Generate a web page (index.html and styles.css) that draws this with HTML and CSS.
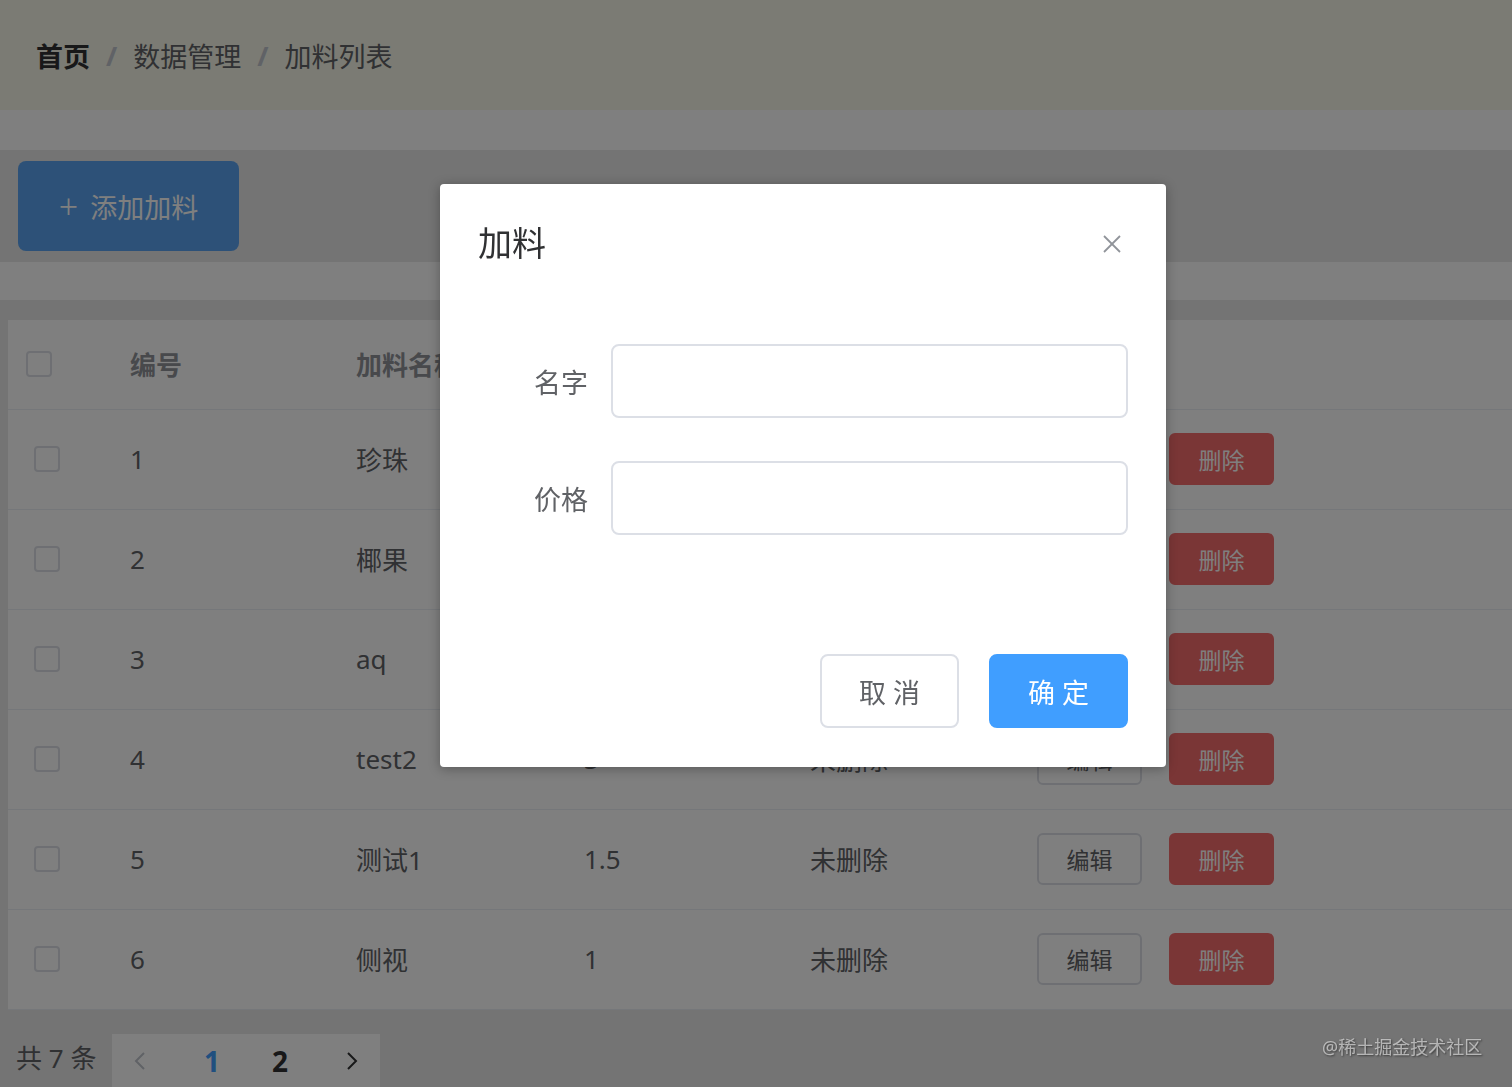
FILE: index.html
```html
<!DOCTYPE html>
<html lang="zh-CN">
<head>
    <meta charset="UTF-8">
    <meta name="viewport" content="width=device-width, initial-scale=1.0">
    <title>加料列表</title>
    <link rel="stylesheet" href="styles.css">
</head>
<body>
    <div class="breadcrumb">
        <span class="crumb crumb-home">首页</span>
        <span class="crumb-sep">/</span>
        <span class="crumb">数据管理</span>
        <span class="crumb-sep">/</span>
        <span class="crumb">加料列表</span>
    </div>

    <div class="gap-band"></div>

    <div class="toolbar">
        <button class="add-btn"><span class="add-plus">+</span>添加加料</button>
    </div>

    <div class="gap-band gap-small"></div>

    <div class="content">
        <table class="data-table">
            <colgroup>
                <col style="width: 99px">
                <col style="width: 226px">
                <col style="width: 228px">
                <col style="width: 226px">
                <col style="width: 227px">
                <col>
            </colgroup>
            <thead>
                <tr>
                    <th class="check-head"><span class="checkbox"></span></th>
                    <th>编号</th>
                    <th>加料名称</th>
                    <th>价格</th>
                    <th>状态</th>
                    <th>操作</th>
                </tr>
            </thead>
            <tbody>
                <tr>
                    <td class="check-cell"><span class="checkbox"></span></td>
                    <td>1</td><td>珍珠</td><td>2</td><td>未删除</td>
                    <td><button class="row-btn">编辑</button><button class="row-btn danger">删除</button></td>
                </tr>
                <tr>
                    <td class="check-cell"><span class="checkbox"></span></td>
                    <td>2</td><td>椰果</td><td>2</td><td>未删除</td>
                    <td><button class="row-btn">编辑</button><button class="row-btn danger">删除</button></td>
                </tr>
                <tr>
                    <td class="check-cell"><span class="checkbox"></span></td>
                    <td>3</td><td>aq</td><td>1</td><td>未删除</td>
                    <td><button class="row-btn">编辑</button><button class="row-btn danger">删除</button></td>
                </tr>
                <tr>
                    <td class="check-cell"><span class="checkbox"></span></td>
                    <td>4</td><td>test2</td><td>3</td><td>未删除</td>
                    <td><button class="row-btn">编辑</button><button class="row-btn danger">删除</button></td>
                </tr>
                <tr>
                    <td class="check-cell"><span class="checkbox"></span></td>
                    <td>5</td><td>测试1</td><td>1.5</td><td>未删除</td>
                    <td><button class="row-btn">编辑</button><button class="row-btn danger">删除</button></td>
                </tr>
                <tr>
                    <td class="check-cell"><span class="checkbox"></span></td>
                    <td>6</td><td>侧视</td><td>1</td><td>未删除</td>
                    <td><button class="row-btn">编辑</button><button class="row-btn danger">删除</button></td>
                </tr>
            </tbody>
        </table>

        <div class="pagination">
            <span class="total">共 7 条</span>
            <div class="pager">
                <span class="pager-arrow disabled">
                    <svg width="14" height="22" viewBox="0 0 14 22"><polyline points="11,3 3,11 11,19" fill="none" stroke="currentColor" stroke-width="2"/></svg>
                </span>
                <span class="pager-num active">1</span>
                <span class="pager-num">2</span>
                <span class="pager-arrow">
                    <svg width="14" height="22" viewBox="0 0 14 22"><polyline points="3,3 11,11 3,19" fill="none" stroke="currentColor" stroke-width="2"/></svg>
                </span>
            </div>
        </div>
    </div>

    <!-- dialog -->
    <div class="modal-mask"></div>
    <div class="dialog">
        <div class="dialog-header">
            <span class="dialog-title">加料</span>
            <svg class="dialog-close" width="20" height="20" viewBox="0 0 20 20">
                <line x1="2" y1="2" x2="18" y2="18" stroke="#909399" stroke-width="1.8"/>
                <line x1="18" y1="2" x2="2" y2="18" stroke="#909399" stroke-width="1.8"/>
            </svg>
        </div>
        <div class="dialog-body">
            <div class="form-item">
                <label class="form-label">名字</label>
                <input class="form-input" type="text">
            </div>
            <div class="form-item">
                <label class="form-label">价格</label>
                <input class="form-input" type="text">
            </div>
        </div>
        <div class="dialog-footer">
            <button class="dlg-btn">取 消</button>
            <button class="dlg-btn primary">确 定</button>
        </div>
    </div>

    <div class="watermark">@稀土掘金技术社区</div>
</body>
</html>
```

FILE: styles.css
```css
* {
    box-sizing: border-box;
    margin: 0;
    padding: 0;
}

html, body {
    overflow: hidden;
}

body {
    width: 1512px;
    height: 1087px;
    background-color: #fff;
    font-family: "Noto Sans", "Noto Sans CJK SC", sans-serif;
    color: #606266;
}

button, input {
    font-family: inherit;
}

/* breadcrumb */
.breadcrumb {
    height: 110px;
    display: flex;
    align-items: center;
    padding-left: 36px;
    background-color: #f6f6e8;
    font-size: 27px;
}

.crumb {
    color: #606266;
}

.crumb-home {
    color: #303133;
    font-weight: bold;
}

.crumb-sep {
    color: #c0c4cc;
    margin: 0 16px;
    font-weight: bold;
}

.gap-band {
    height: 40px;
    background-color: #fff;
}

.gap-small {
    height: 38px;
}

/* toolbar */
.toolbar {
    height: 112px;
    background-color: #e8e8e8;
    padding: 11px 18px;
}

.add-btn {
    width: 221px;
    height: 90px;
    border: none;
    border-radius: 8px;
    background-color: #5aa3f0;
    color: #fff;
    font-size: 27px;
    display: flex;
    align-items: center;
    justify-content: center;
}

.add-plus {
    font-size: 34px;
    font-weight: 300;
    margin-right: 12px;
    line-height: 1;
}

/* table */
.content {
    height: 787px;
    background-color: #e9e9e9;
    padding-top: 20px;
    padding-left: 8px;
}

.data-table {
    width: 1504px;
    table-layout: fixed;
    border-collapse: collapse;
    background-color: #fff;
    font-size: 26px;
}

.data-table th {
    height: 89px;
    text-align: left;
    padding-left: 23px;
    color: #909399;
    font-weight: bold;
    border-bottom: 1px solid #ebeef5;
}

.data-table td {
    height: 100px;
    padding-left: 23px;
    border-bottom: 1px solid #ebeef5;
    color: #606266;
}

.data-table th.check-head {
    padding-left: 18px;
}

.data-table td.check-cell {
    padding-left: 26px;
}

.checkbox {
    display: block;
    width: 26px;
    height: 26px;
    border: 2px solid #dcdfe6;
    border-radius: 4px;
    background-color: #fff;
}

.row-btn {
    width: 105px;
    height: 52px;
    border: 2px solid #dcdfe6;
    border-radius: 6px;
    background-color: #fff;
    color: #606266;
    font-size: 23px;
    margin-right: 27px;
    vertical-align: middle;
}

.row-btn.danger {
    background-color: #f56c6c;
    border-color: #f56c6c;
    color: #fff;
}

/* pagination */
.pagination {
    display: flex;
    align-items: center;
    padding-top: 24px;
    margin-left: -8px;
}

.total {
    font-size: 26px;
    color: #606266;
    width: 112px;
    padding-left: 16px;
    margin-top: -8px;
}

.pager {
    display: flex;
    align-items: center;
    height: 54px;
    background-color: #fff;
    width: 268px;
}

.pager-arrow {
    width: 56px;
    display: flex;
    justify-content: center;
    color: #303133;
}

.pager-arrow.disabled {
    color: #c0c4cc;
    margin-right: 10px;
}

.pager-arrow:last-child {
    margin-left: 10px;
}

.pager-num {
    width: 68px;
    text-align: center;
    font-size: 28px;
    font-weight: bold;
    color: #303133;
}

.pager-num.active {
    color: #409eff;
}

/* modal */
.modal-mask {
    position: fixed;
    top: 0;
    left: 0;
    width: 100%;
    height: 100%;
    background-color: rgba(0, 0, 0, 0.5);
}

.dialog {
    position: absolute;
    left: 440px;
    top: 184px;
    width: 726px;
    height: 583px;
    display: flex;
    flex-direction: column;
    background-color: #fff;
    border-radius: 4px;
    box-shadow: 0 2px 12px rgba(0, 0, 0, 0.3);
}

.dialog-header {
    display: flex;
    align-items: center;
    justify-content: space-between;
    padding: 36px 44px 19px 38px;
    height: 102px;
}

.dialog-title {
    font-size: 34px;
    line-height: 45px;
    color: #303133;
}

.dialog-close {
    display: block;
}

.dialog-body {
    padding: 58px 38px 0 38px;
}

.form-item {
    display: flex;
    align-items: center;
    margin-bottom: 43px;
}

.form-item:last-child {
    margin-bottom: 0;
}

.form-label {
    width: 133px;
    text-align: right;
    padding-right: 23px;
    font-size: 27px;
    color: #606266;
}

.form-input {
    flex: 1;
    height: 74px;
    border: 2px solid #dcdfe6;
    border-radius: 8px;
    background-color: #fff;
    outline: none;
}

.dialog-footer {
    display: flex;
    justify-content: flex-end;
    gap: 30px;
    margin-top: auto;
    padding: 0 38px 39px;
}

.dlg-btn {
    width: 139px;
    height: 74px;
    border: 2px solid #dcdfe6;
    border-radius: 8px;
    background-color: #fff;
    color: #606266;
    font-size: 27px;
}

.dlg-btn.primary {
    background-color: #409eff;
    border-color: #409eff;
    color: #fff;
}

.watermark {
    position: absolute;
    left: 1322px;
    top: 1033px;
    font-size: 18px;
    color: rgba(255, 255, 255, 0.55);
    text-shadow: 1px 1px 2px rgba(0, 0, 0, 0.5);
    white-space: nowrap;
}
```
